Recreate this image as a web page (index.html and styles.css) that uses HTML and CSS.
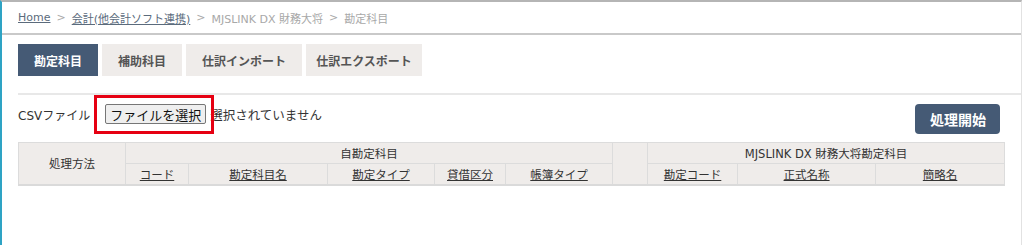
FILE: index.html
```html
<!DOCTYPE html>
<html lang="ja">
<head>
<meta charset="utf-8">
<link rel="stylesheet" href="styles.css">
</head>
<body>
<div class="frame">
  <nav class="breadcrumb">
    <a class="crumb-link" href="#">Home</a>
    <span class="sep">&gt;</span>
    <a class="crumb-link" href="#">会計(他会計ソフト連携)</a>
    <span class="sep">&gt;</span>
    <span class="crumb">MJSLINK DX 財務大将</span>
    <span class="sep">&gt;</span>
    <span class="crumb">勘定科目</span>
  </nav>
  <div class="content">
    <div class="tabs">
      <div class="tab tab-s active">勘定科目</div>
      <div class="tab tab-s">補助科目</div>
      <div class="tab tab-l">仕訳インポート</div>
      <div class="tab tab-l">仕訳エクスポート</div>
    </div>
    <div class="divider"></div>
    <div class="csv-row">
      <div class="csv-left">
        <span class="csv-label">CSVファイル</span>
        <span class="file-wrap">
          <button class="file-btn" type="button">ファイルを選択</button>
          <span class="highlight"></span>
        </span>
        <span class="file-none">選択されていません</span>
      </div>
      <button class="start-btn" type="button">処理開始</button>
    </div>
    <table class="grid">
      <colgroup>
        <col class="c107"><col class="c63"><col class="c139"><col class="c107"><col class="c71"><col class="c107"><col class="c35"><col class="c90"><col class="c138"><col class="c129">
      </colgroup>
      <thead>
        <tr>
          <th rowspan="2">処理方法</th>
          <th colspan="5">自勘定科目</th>
          <th rowspan="2"></th>
          <th colspan="3">MJSLINK DX 財務大将勘定科目</th>
        </tr>
        <tr>
          <th><a href="#">コード</a></th>
          <th><a href="#">勘定科目名</a></th>
          <th><a href="#">勘定タイプ</a></th>
          <th><a href="#">貸借区分</a></th>
          <th><a href="#">帳簿タイプ</a></th>
          <th><a href="#">勘定コード</a></th>
          <th><a href="#">正式名称</a></th>
          <th><a href="#">簡略名</a></th>
        </tr>
      </thead>
    </table>
  </div>
</div>
</body>
</html>
```

FILE: styles.css
```css
* { box-sizing: border-box; }
html, body { margin: 0; padding: 0; background: #fff; }
body {
  font-family: "DejaVu Sans", "Noto Sans CJK JP", sans-serif;
  color: #333;
  width: 1024px;
  height: 245px;
  overflow: hidden;
}
.frame {
  width: 1022px;
  height: 245px;
  border-left: 2px solid #2ea3c4;
  border-top: 2px solid #b5b5b5;
  border-right: 1px solid #e2e2e2;
}
.breadcrumb {
  height: 33px;
  padding-left: 16px;
  border-bottom: 2px solid #c9c9c9;
  display: flex;
  align-items: center;
  gap: 6px;
  font-size: 11px;
  color: #a8a8a8;
}
.crumb-link { color: #5b6b7c; text-decoration: underline; }
.sep { color: #aaa; }
.content { padding: 9px 0 0 16px; }
.tabs { display: flex; gap: 4px; }
.tab {
  height: 32px;
  display: flex;
  align-items: center;
  justify-content: center;
  background: #efecea;
  color: #555;
  font-size: 12px;
  font-weight: bold;
  white-space: nowrap;
}
.tab-s { width: 80px; }
.tab-l { width: 116px; }
.tab.active { background: #455a75; color: #fff; }
.divider { margin-top: 17px; height: 2px; background: #e8e8e8; }
.csv-row {
  margin-top: 9px;
  width: 982px;
  display: flex;
  justify-content: space-between;
  align-items: flex-start;
}
.csv-left { display: flex; align-items: center; height: 20px; font-size: 12px; color: #333; }
.csv-label { margin-right: 15px; }
.file-wrap { position: relative; display: inline-flex; }
.file-btn {
  height: 20px;
  padding: 0 4px;
  font-family: inherit;
  font-size: 13px;
  color: #111;
  background: #efefef;
  border: 1px solid #767676;
  border-radius: 2px;
}
.highlight {
  position: absolute;
  left: -11px;
  top: -9px;
  width: 120px;
  height: 39px;
  border: 3px solid #e60012;
  pointer-events: none;
}
.file-none { margin-left: 4px; font-size: 12.5px; }
.start-btn {
  height: 30px;
  padding: 0 14px 0 15px;
  background: #455a75;
  color: #fff;
  border: 0;
  border-radius: 4px;
  font-family: inherit;
  font-size: 14px;
  font-weight: bold;
}
.grid {
  margin-top: 8px;
  width: 986px;
  table-layout: fixed;
  border-collapse: collapse;
  background: #efecea;
  border-bottom: 2px solid #dadada;
  font-size: 11.5px;
}
.grid th {
  height: 21px;
  padding: 0;
  border: 1px solid #dcdcdc;
  font-weight: normal;
  color: #333;
  text-align: center;
  vertical-align: middle;
}
.grid th a { color: #333; text-decoration: underline; }
.c107 { width: 107px; }
.c63 { width: 63px; }
.c139 { width: 139px; }
.c71 { width: 71px; }
.c35 { width: 35px; }
.c90 { width: 90px; }
.c138 { width: 138px; }
.c129 { width: 129px; }
```
